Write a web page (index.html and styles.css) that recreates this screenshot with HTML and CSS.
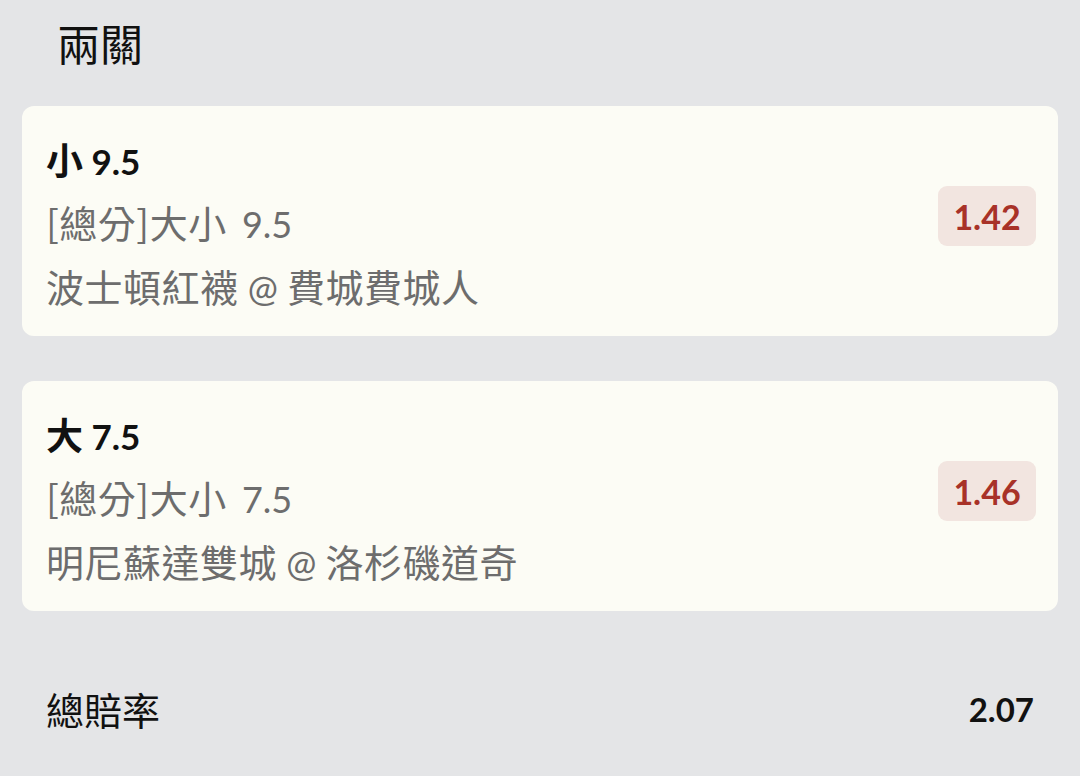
FILE: index.html
```html
<!DOCTYPE html>
<html lang="zh-Hant">
<head>
<meta charset="utf-8">
<link rel="stylesheet" href="styles.css">
</head>
<body>
<div class="page">
  <h1 class="title">兩關</h1>
  <div class="card">
    <div class="info">
      <div class="pick"><span class="c">小</span> 9.5</div>
      <div class="market"><span class="c">[總分]大小</span> <span class="num">9.5</span></div>
      <div class="match"><span class="c">波士頓紅襪</span> @ <span class="c">費城費城人</span></div>
    </div>
    <div class="odds">1.42</div>
  </div>
  <div class="card">
    <div class="info">
      <div class="pick"><span class="c">大</span> 7.5</div>
      <div class="market"><span class="c">[總分]大小</span> <span class="num">7.5</span></div>
      <div class="match"><span class="c">明尼蘇達雙城</span> @ <span class="c">洛杉磯道奇</span></div>
    </div>
    <div class="odds">1.46</div>
  </div>
  <div class="total">
    <div class="total-label">總賠率</div>
    <div class="total-value">2.07</div>
  </div>
</div>
</body>
</html>
```
FILE: styles.css
```css
html, body {
  margin: 0;
  padding: 0;
  background: #e4e5e7;
}
body {
  font-family: Lato, "Noto Sans CJK TC", sans-serif;
  color: #111;
}
.page {
  width: 1080px;
  height: 776px;
  overflow: hidden;
  display: flex;
  flex-direction: column;
  padding: 0 22px;
  box-sizing: border-box;
}
.title {
  margin: 0;
  padding: 14px 0 0 35px;
  font-family: "Noto Sans CJK TC", sans-serif;
  font-size: 43px;
  font-weight: 400;
  line-height: 56px;
  height: 106px;
  box-sizing: border-box;
  color: #111;
}
.c {
  font-family: "Noto Sans CJK TC", sans-serif;
  line-height: 1;
}
.card {
  background: #fcfcf5;
  border-radius: 12px;
  height: 230px;
  box-sizing: border-box;
  padding: 24px 22px 0 24px;
  display: flex;
  align-items: flex-start;
  justify-content: space-between;
  margin-bottom: 45px;
}
.info {
  display: flex;
  flex-direction: column;
}
.pick {
  font-size: 35px;
  font-weight: 700;
  line-height: 62px;
  height: 62px;
  color: #111;
}
.pick .c {
  font-size: 37px;
}
.market, .match {
  font-size: 36px;
  line-height: 64px;
  height: 64px;
  color: #6d6d6d;
}
.market .c, .match .c {
  font-size: 38px;
  letter-spacing: 0.5px;
}
.market .num {
  margin-left: 6px;
}
.odds {
  margin-top: 56px;
  background: #f2e5e0;
  color: #a83228;
  font-size: 34px;
  font-weight: 700;
  border-radius: 9px;
  width: 98px;
  height: 60px;
  display: flex;
  align-items: center;
  justify-content: center;
}
.total {
  display: flex;
  justify-content: space-between;
  align-items: center;
  padding: 23px 24px 0 24px;
}
.total-label {
  font-family: "Noto Sans CJK TC", sans-serif;
  font-size: 38px;
  line-height: 60px;
  color: #111;
}
.total-value {
  font-size: 33px;
  font-weight: 700;
  color: #111;
}
```
